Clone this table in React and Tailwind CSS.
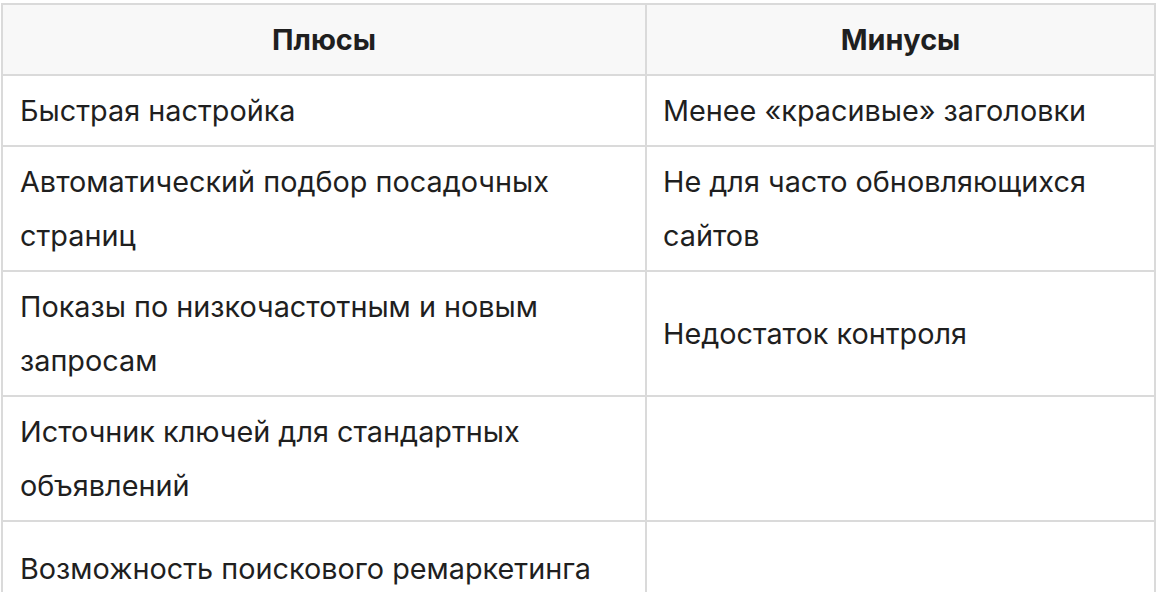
export default function App() {
  const rows = [
    ["Быстрая настройка", "Менее «красивые» заголовки", false],
    ["Автоматический подбор посадочных страниц", "Не для часто обновляющихся сайтов", false],
    ["Показы по низкочастотным и новым запросам", "Недостаток контроля", false],
    ["Источник ключей для стандартных объявлений", "", false],
    ["Возможность поискового ремаркетинга", "", true],
  ];
  return (
    <div className="w-[1156px] h-[592px] overflow-hidden bg-white pt-[3px] pl-[1px]" style={{ fontFamily: "Inter, 'Noto Sans', sans-serif" }}>
      <table className="w-[1155px] table-fixed border-separate border-spacing-0 border-t-2 border-l-2 border-[#dadada] text-[28.8px] leading-[54px] text-[#1f1f1f]">
        <colgroup>
          <col className="w-[644px]" />
          <col className="w-[509px]" />
        </colgroup>
        <thead>
          <tr className="bg-[#f8f8f8]">
            <th className="border-r-2 border-b-2 border-[#dadada] px-[17px] py-[7.5px] text-center font-bold">Плюсы</th>
            <th className="border-r-2 border-b-2 border-[#dadada] px-[16px] py-[7.5px] text-center font-bold">Минусы</th>
          </tr>
        </thead>
        <tbody>
          {rows.map((r, i) => (
            <tr key={i} className={r[2] ? "h-[96px]" : ""}>
              <td className="border-r-2 border-b-2 border-[#dadada] pl-[17px] pr-[17px] py-[7.5px] align-middle">{r[0]}</td>
              <td className="border-r-2 border-b-2 border-[#dadada] pl-[16px] pr-[16px] py-[7.5px] align-middle">{r[1]}</td>
            </tr>
          ))}
        </tbody>
      </table>
    </div>
  );
}
